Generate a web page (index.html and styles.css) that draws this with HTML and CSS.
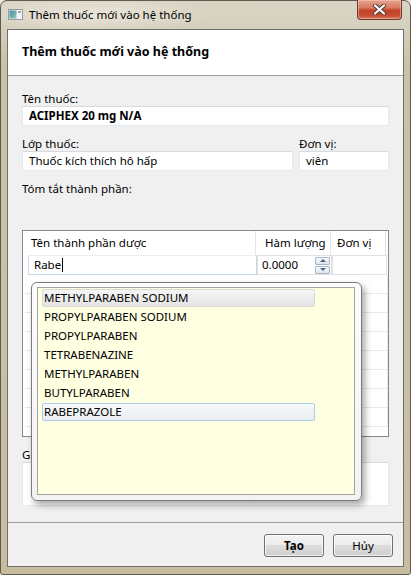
FILE: index.html
```html
<!DOCTYPE html>
<html lang="vi">
<head>
<meta charset="utf-8">
<title>Thêm thuốc mới vào hệ thống</title>
<link rel="stylesheet" href="styles.css">
</head>
<body>
<div class="window">
  <div class="titlebar">
    <svg class="appicon" width="15" height="11" viewBox="0 0 15 11">
      <defs>
        <linearGradient id="ig" x1="0" y1="0" x2="1" y2="1">
          <stop offset="0" stop-color="#3f8fa0"/>
          <stop offset="1" stop-color="#9cc7b3"/>
        </linearGradient>
      </defs>
      <rect x="0.5" y="0.5" width="14" height="10" fill="#f4f4f4" stroke="#8e9aa6"/>
      <rect x="1.5" y="1.5" width="7" height="8" fill="url(#ig)"/>
      <rect x="10" y="2" width="3" height="2" fill="#9aa5ad"/>
    </svg>
    <span class="title">Thêm thuốc mới vào hệ thống</span>
    <div class="close">
      <svg width="13" height="11" viewBox="0 0 13 11">
        <path d="M2 1.5 L11 9.5 M11 1.5 L2 9.5" stroke="#4d3732" stroke-width="4" stroke-linecap="round"/>
        <path d="M2 1.5 L11 9.5 M11 1.5 L2 9.5" stroke="#ffffff" stroke-width="2.2" stroke-linecap="round"/>
      </svg>
    </div>
  </div>

  <div class="client">
    <div class="header">Thêm thuốc mới vào hệ thống</div>
    <div class="body">
      <div class="label first">Tên thuốc:</div>
      <div class="input strong">ACIPHEX 20 mg N/A</div>

      <div class="row2">
        <div class="field">
          <div class="label">Lớp thuốc:</div>
          <div class="input">Thuốc kích thích hô hấp</div>
        </div>
        <div class="field">
          <div class="label">Đơn vị:</div>
          <div class="input">viên</div>
        </div>
      </div>

      <div class="label summary">Tóm tắt thành phần:</div>

      <div class="grid">
        <div class="ghead">
          <div class="gc c1">Tên thành phần dược</div>
          <div class="gc c2">Hàm lượng</div>
          <div class="gc c3">Đơn vị</div>
        </div>
        <div class="gedit">
          <div class="ecell e1">Rabe<span class="caret"></span></div>
          <div class="ecell e2">
            <span>0.0000</span>
            <div class="spin">
              <div class="sbtn"><span class="up"></span></div>
              <div class="sbtn"><span class="down"></span></div>
            </div>
          </div>
          <div class="ecell e3"></div>
        </div>
        <div class="grow"></div>
        <div class="grow"></div>
        <div class="grow"></div>
        <div class="grow"></div>
        <div class="grow"></div>
        <div class="grow"></div>
        <div class="grow"></div>
        <div class="grow"></div>
      </div>

      <div class="label notes">Ghi chú:</div>
      <div class="textarea"></div>
    </div>
    <div class="footer">
      <button class="btn default">Tạo</button>
      <button class="btn">Hủy</button>
    </div>
  </div>

  <div class="popup">
    <div class="list">
      <div class="item hover">METHYLPARABEN SODIUM</div>
      <div class="item">PROPYLPARABEN SODIUM</div>
      <div class="item">PROPYLPARABEN</div>
      <div class="item">TETRABENAZINE</div>
      <div class="item">METHYLPARABEN</div>
      <div class="item">BUTYLPARABEN</div>
      <div class="item selected">RABEPRAZOLE</div>
    </div>
  </div>
</div>
</body>
</html>
```

FILE: styles.css
```css
* { box-sizing: border-box; }
html, body { margin: 0; padding: 0; }
body {
  width: 411px;
  height: 575px;
  overflow: hidden;
  background: #e9e6dc;
  font-family: "Noto Sans", "Open Sans", sans-serif;
  font-size: 11.5px;
  color: #000;
}

.window {
  position: relative;
  width: 411px;
  height: 575px;
  border: 1px solid #5f5a4e;
  border-radius: 7px 7px 3px 3px;
  background: linear-gradient(to bottom, #dad4c4 0, #d5cfbd 28px, #cbc2a6 60px, #c8bd9e 100%);
  display: flex;
  flex-direction: column;
}

/* ---------- title bar ---------- */
.titlebar {
  height: 28px;
  flex: none;
  display: flex;
  align-items: center;
  padding-left: 7px;
  position: relative;
  background: radial-gradient(ellipse 120px 18px at 90px 13px, rgba(236,232,222,0.9), rgba(236,232,222,0) 100%);
  border-radius: 6px 6px 0 0;
}
.appicon { flex: none; margin-top: -2px; }
.title {
  margin-left: 6px;
  line-height: 15px;
  font-size: 11.5px;
  margin-top: -2px;
}
.close {
  position: absolute;
  right: 8px;
  top: -1px;
  width: 45px;
  height: 20px;
  border: 1px solid #6e3a30;
  border-top: none;
  border-radius: 0 0 4px 4px;
  background: linear-gradient(to bottom, #e7a592 0, #d77a62 40%, #c2432b 55%, #c64a30 80%, #d9785c 100%);
  box-shadow: inset 0 0 0 1px rgba(255,210,195,0.45);
  display: flex;
  align-items: center;
  justify-content: center;
}

/* ---------- client ---------- */
.client {
  flex: none;
  margin: 0 6px 0 6px;
  height: 538px;
  border: 1px solid #6f6f6f;
  background: #f0f0f0;
  display: flex;
  flex-direction: column;
}
.header {
  flex: none;
  height: 46px;
  background: #fff;
  border-bottom: 1px solid #a0a0a0;
  padding: 13px 14px 0 14px;
  font-size: 12.5px;
  font-weight: bold;
  line-height: 17px;
}
.body {
  flex: none;
  height: 446px;
  padding: 0 14px;
}
.label { line-height: 15px; height: 15px; white-space: nowrap; }
.label.first { margin-top: 15px; }
.input {
  height: 20px;
  background: #fff;
  border: 1px solid #e3e9ef;
  border-top-color: #d5dbe2;
  padding: 0 6px;
  line-height: 18px;
  white-space: nowrap;
  overflow: hidden;
}
.input.strong { font-weight: bold; }

.row2 {
  display: grid;
  grid-template-columns: 1fr 90px;
  column-gap: 6px;
  margin-top: 10px;
}
.label.summary { margin-top: 10px; }

/* ---------- grid ---------- */
.grid {
  margin-top: 34px;
  height: 207px;
  border: 1px solid #828790;
  background: #fff;
}
.ghead {
  display: flex;
  height: 24px;
}
.gc {
  line-height: 23px;
  border-right: 1px solid #e5e5e5;
  white-space: nowrap;
}
.c1 { width: 233px; padding-left: 8px; }
.c2 { width: 75px; padding-left: 9px; }
.c3 { width: 55px; padding-left: 6px; }

.gedit {
  display: flex;
  height: 20px;
  padding-left: 5px;
}
.ecell {
  height: 20px;
  border: 1px solid #e2e2e2;
  line-height: 18px;
  white-space: nowrap;
}
.e1 {
  width: 229px;
  padding-left: 5px;
  border-color: #c5d7ea;
  border-top-color: #e8eef5;
  display: flex;
  align-items: center;
}
.caret {
  display: inline-block;
  width: 1px;
  height: 14px;
  background: #000;
  margin-left: 1px;
}
.e2 {
  width: 75px;
  padding-left: 4px;
  display: flex;
  align-items: center;
  justify-content: space-between;
  padding-right: 1px;
}
.e3 { width: 55px; }
.spin {
  width: 15px;
  height: 17px;
  display: flex;
  flex-direction: column;
  gap: 1px;
}
.sbtn {
  flex: 1;
  border: 1px solid #a9b7c9;
  border-radius: 1px;
  background: linear-gradient(to bottom, #f7f9fb, #dfe5ec);
  display: flex;
  align-items: center;
  justify-content: center;
}
.up, .down {
  width: 0;
  height: 0;
  border-left: 3px solid transparent;
  border-right: 3px solid transparent;
}
.up { border-bottom: 3px solid #4e5f86; }
.down { border-top: 3px solid #4e5f86; }

.grow {
  height: 19px;
  margin-left: 2px;
  width: 363px;
  border-bottom: 1px solid #e8e8e8;
  border-right: 1px solid #e8e8e8;
}

.label.notes { margin-top: 10px; }
.textarea {
  height: 44px;
  background: #fff;
  border: 1px solid #e3e9ef;
  border-top-color: #d5dbe2;
}

/* ---------- footer ---------- */
.footer {
  flex: none;
  height: 44px;
  border-top: 1px solid #a0a0a0;
  display: flex;
  justify-content: flex-end;
  align-items: flex-start;
  padding: 11px 10px 0 0;
  gap: 9px;
}
.btn {
  width: 60px;
  height: 23px;
  font-family: inherit;
  font-size: 11.5px;
  color: #000;
  border: 1px solid #707070;
  border-radius: 3px;
  background: linear-gradient(to bottom, #f3f3f3 0, #ececec 49%, #dddddd 50%, #cfcfcf 100%);
  box-shadow: inset 0 0 0 1px rgba(255,255,255,0.7);
  padding: 0;
  line-height: 20px;
}
.btn.default { font-weight: bold; }

/* ---------- autocomplete popup ---------- */
.popup {
  position: absolute;
  left: 30px;
  top: 281px;
  width: 331px;
  height: 219px;
  border: 1px solid #7b7b7b;
  border-radius: 6px;
  background: linear-gradient(to bottom, #fcfcfc, #f3f3f3);
  box-shadow: 3px 4px 7px rgba(0,0,0,0.35);
  padding: 4px 6px 5px 5px;
}
.list {
  height: 100%;
  border: 1px solid #a3a3a3;
  background: #ffffe1;
  padding: 1px 0 0 4px;
}
.item {
  width: 273px;
  height: 18px;
  margin-bottom: 1px;
  padding-left: 1px;
  line-height: 16px;
  border: 1px solid transparent;
  border-radius: 2px;
  white-space: nowrap;
}
.item.hover {
  border-color: #d9d9d9;
  background: linear-gradient(to bottom, #f5f5f5, #e4e4e4);
}
.item.selected {
  border-color: #a8cdf0;
  background: linear-gradient(to bottom, #f8fafb, #e9edef);
}
```
